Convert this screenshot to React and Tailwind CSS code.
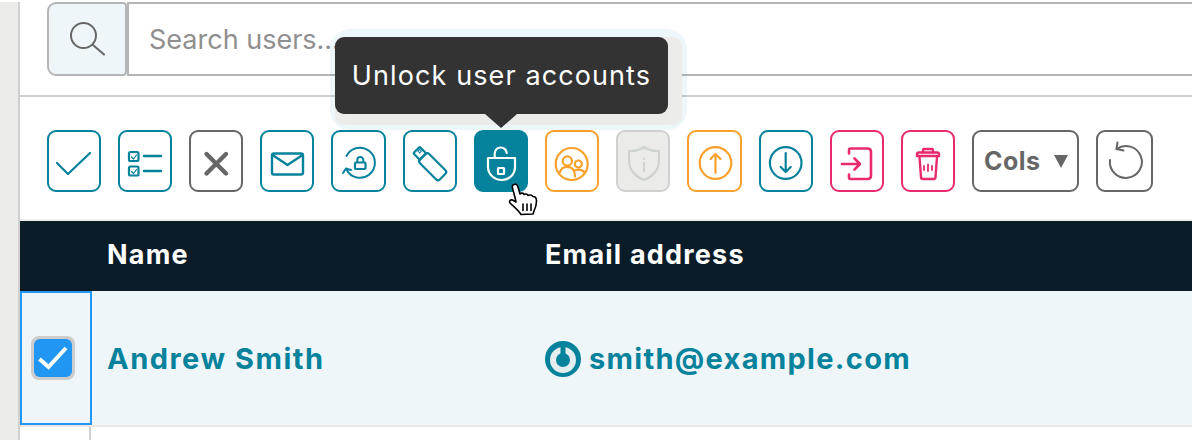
const TEAL = "#06829c"
const ORANGE = "#f9a12c"
const PINK = "#e92a6f"
const GREY = "#666666"

// every icon is drawn in button coordinates, so the viewBox skips the 2px border
function Tool({ className, children }) {
  return (
    <button className={`h-[62px] shrink-0 rounded-[9px] border-2 bg-white ${className}`}>
      <svg viewBox="2 2 50 58" preserveAspectRatio="xMidYMid meet" className="h-full w-full" fill="none" strokeLinecap="round" strokeLinejoin="round">
        {children}
      </svg>
    </button>
  )
}

function Check() {
  return <path d="M10 33 L21 44 L43 23" stroke={TEAL} strokeWidth="2.2" />
}

function CheckList() {
  return (
    <g stroke={TEAL} strokeWidth="2.2">
      <rect x="11" y="22" width="9.5" height="9" rx="1.5" />
      <rect x="11" y="36.5" width="9.5" height="9" rx="1.5" />
      <path d="M13.5 27 L15.5 29 L18.5 25 M13.5 41.5 L15.5 43.5 L18.5 39.5" strokeWidth="1.2" />
      <path d="M26 26 H43 M26 41 H43" strokeWidth="2.4" />
    </g>
  )
}

function Cross() {
  return <path d="M17.5 24 L37 43.5 M37 24 L17.5 43.5" stroke={GREY} strokeWidth="4.4" />
}

function Mail() {
  return (
    <g stroke={TEAL} strokeWidth="2.4">
      <rect x="12" y="23.5" width="31" height="21" rx="2" />
      <path d="M12.5 25 L27.5 35 L42.5 25" />
    </g>
  )
}

function LockCycle() {
  return (
    <g stroke={TEAL} strokeWidth="2">
      <path d="M15 26 A15 15 0 1 1 15 39.5" />
      <path d="M11.5 43 L14.5 38.5 L19.5 40" />
      <rect x="23.5" y="32.5" width="10.5" height="6.5" rx="1" strokeWidth="2.2" />
      <path d="M25.8 32 V30 A3 3 0 0 1 31.8 30 V32" />
    </g>
  )
}

function Usb() {
  return (
    <g stroke={TEAL} strokeWidth="2.2">
      <rect x="15.7" y="30.2" width="28" height="13" rx="2.5" transform="rotate(45 29.7 36.7)" />
      <rect x="12.2" y="18.8" width="9" height="9" rx="1" transform="rotate(45 16.7 23.3)" />
      <rect x="15.5" y="20" width="2.4" height="2.4" strokeWidth="1" transform="rotate(45 16.7 21.2)" />
    </g>
  )
}

function Unlock() {
  return (
    <g stroke="#ffffff" strokeWidth="2.2">
      <path d="M14 28 H41 V37 A13 13 0 0 1 28 50 A14 13 0 0 1 14 37 Z" />
      <path d="M20.7 27.5 V24 A6 6 0 0 1 32.7 23" />
      <rect x="24" y="38" width="6" height="6" rx="0.5" />
    </g>
  )
}

function Group() {
  return (
    <g stroke={ORANGE} strokeWidth="2.2">
      <circle cx="26.7" cy="34" r="16" />
      <circle cx="22.3" cy="31" r="4.6" />
      <circle cx="33.3" cy="34" r="3.5" />
      <path d="M15 42 C16 38 19 36.8 22.3 36.8 C27 36.8 30 40.5 30 46.5" />
      <path d="M30 40.2 C34 39 38 40 40 43" />
    </g>
  )
}

function Shield() {
  return (
    <g stroke="#cfd3d0" strokeWidth="2.2">
      <path d="M28 17 C32 20 37 21 43 21 V31 C43 40 36 47 28 50 C20 47 13 40 13 31 V21 C19 21 24 20 28 17 Z" />
      <path d="M28 33 V41 M28 28.5 V29" />
    </g>
  )
}

function ArrowUp() {
  return (
    <g stroke={ORANGE} strokeWidth="2.2">
      <circle cx="28" cy="33" r="15.8" />
      <path d="M28 43 V24 M23 29 L28 24 L33 29" />
    </g>
  )
}

function ArrowDown() {
  return (
    <g stroke={TEAL} strokeWidth="2.2">
      <circle cx="26.7" cy="33" r="15.8" />
      <path d="M26.7 23 V42 M21.7 37 L26.7 42 L31.7 37" />
    </g>
  )
}

function Login() {
  return (
    <g stroke={PINK} strokeWidth="2.6">
      <path d="M19 23.5 V20 Q19 18.5 20.5 18.5 H37.5 Q41 18.5 41 22 V45.5 Q41 49 37.5 49 H20.5 Q19 49 19 47.5 V44.5" />
      <path d="M12 34 H30 M24.5 28.5 L30 34 L24.5 39.5" />
    </g>
  )
}

function Trash() {
  return (
    <g stroke={PINK} strokeWidth="2.4">
      <path d="M16 26 V24 Q16 22.5 18 22.5 H36 Q38 22.5 38 24 V26 Z" />
      <path d="M22 22.5 V20 Q22 19 23 19 H31 Q32 19 32 20 V22.5" />
      <path d="M18.5 27 L20 47 Q20 49 22 49 H32.5 Q34.5 49 34.5 47 L36 27" />
      <path d="M23 36 V40 M27 34.5 V41 M31 36 V40" strokeWidth="1.8" />
    </g>
  )
}

function Reset() {
  return (
    <g stroke={GREY} strokeWidth="2">
      <path d="M19 19 A16 16 0 1 1 12.5 30" />
      <path d="M20 12.5 L19 19 L26 20.5" />
    </g>
  )
}

function HandCursor() {
  return (
    <svg viewBox="0 0 30 33" className="h-[33px] w-[30px]" strokeLinejoin="round" strokeLinecap="round">
      <path
        d="M6 1.5 C8 0.5 9.5 2 10 4 L12 11 C13.5 9.5 15.5 10 16 11.5 C17.5 10.5 19.5 11 20 12.5 C21.5 11.5 24 12 25 13.5 C27.5 13.5 28.5 15.5 28.5 18 C28.5 22 27.5 25 26 28 L25 31 L13 31.5 C11 28 7 24.5 2.5 20.5 C0.5 18.5 2 16.5 4.5 17 L8 19 C7 14 5.5 9 4.5 5 C4 3.5 4.5 2 6 1.5 Z"
        fill="#ffffff"
        stroke="#000000"
        strokeWidth="1.6"
      />
      <path d="M15 21 V27.5 M19 21 V27.5 M23 21 V27.5" stroke="#000000" strokeWidth="1.6" />
    </svg>
  )
}

export default function App() {
  const tools = [
    { cls: "w-[54px] border-[#06829c]", icon: <Check /> },
    { cls: "w-[54px] border-[#06829c]", icon: <CheckList /> },
    { cls: "w-[54px] border-[#666666]", icon: <Cross /> },
    { cls: "w-[54px] border-[#06829c]", icon: <Mail /> },
    { cls: "w-[55px] border-[#06829c]", icon: <LockCycle /> },
    { cls: "w-[54px] border-[#06829c]", icon: <Usb /> },
    { cls: "w-[54px] border-[#06829c] !bg-[#06829c]", icon: <Unlock /> },
    { cls: "w-[54px] border-[#f9a12c]", icon: <Group /> },
    { cls: "w-[54px] border-[#d0d0d0] !bg-[#ebebe9]", icon: <Shield /> },
    { cls: "w-[55px] border-[#f9a12c]", icon: <ArrowUp /> },
    { cls: "w-[54px] border-[#06829c]", icon: <ArrowDown /> },
    { cls: "w-[54px] border-[#e92a6f]", icon: <Login /> },
    { cls: "w-[54px] border-[#e92a6f]", icon: <Trash /> },
  ]

  return (
    <div className="relative h-[440px] w-[1192px] overflow-hidden bg-white pt-[2px] font-['Inter',sans-serif]">
      <div className="flex h-[438px]">
        {/* gutter on the left */}
        <div className="w-[20px] shrink-0 border-r-2 border-[#d0d0d0] bg-[#ebebe9]" />

        <div className="min-w-0 flex-1">
          {/* search */}
          <div className="flex h-[95px] border-b-2 border-[#d0d0d0] pl-[27px]">
            <button className="flex h-[74px] w-[80px] shrink-0 items-center justify-center rounded-l-[9px] rounded-r-[4px] border-2 border-[#b5b5b5] bg-[#eef6f9]">
              <svg viewBox="0 0 40 40" className="h-[40px] w-[40px]" fill="none" stroke="#666666" strokeWidth="2" strokeLinecap="round">
                <circle cx="16.5" cy="16.5" r="12.5" />
                <path d="M26 26 L37 35.5" />
              </svg>
            </button>
            <div className="flex h-[74px] flex-1 items-center border-y-2 border-l-2 border-[#b5b5b5] pl-[20px] pt-[2px] text-[27px] text-[#8f8f8f]">
              Search users...
            </div>
          </div>

          {/* toolbar */}
          <div className="flex h-[124px] items-start gap-[17px] border-b-2 border-[#eeeeee] pl-[27px] pt-[33px]">
            {tools.map((t, i) => (
              <Tool key={i} className={t.cls}>{t.icon}</Tool>
            ))}
            <button className="flex h-[62px] w-[107px] shrink-0 items-center justify-between rounded-[9px] border-2 border-[#666666] bg-white pl-[10px] pr-[9px] pt-[1px] text-[25px] font-bold tracking-[0.5px] text-[#666666]">
              <span>Cols</span>
              <svg viewBox="0 0 14 13" className="h-[13px] w-[14px]">
                <path d="M0 0 H14 L7 13 Z" fill="#666666" />
              </svg>
            </button>
            <Tool className="w-[57px] border-[#666666]"><Reset /></Tool>
          </div>

          {/* table */}
          <div className="flex h-[70px] items-center bg-[#0b1c29] pb-[2px] text-[27px] font-bold tracking-[1.2px] text-white">
            <div className="w-[87px] shrink-0" />
            <div className="w-[438px] shrink-0">Name</div>
            <div>Email address</div>
          </div>
          <div className="flex h-[136px] items-center border-b-2 border-[#e8e8e8] bg-[#eef6f9] text-[29px] font-bold tracking-[1.5px] text-[#06829c]">
            <div className="flex h-[134px] w-[72px] shrink-0 items-center justify-center border-2 border-[#2196f3] pr-[6px]">
              <div className="flex h-[44px] w-[44px] items-center justify-center rounded-[8px] bg-[#cccccc]">
                <div className="flex h-[38px] w-[38px] items-center justify-center rounded-[6px] bg-[#2196f3]">
                  <svg viewBox="0 0 30 24" className="h-[24px] w-[30px]" fill="none" stroke="#ffffff" strokeWidth="4">
                    <path d="M1.5 13 L10.5 21 L28 2" />
                  </svg>
                </div>
              </div>
            </div>
            <div className="w-[453px] shrink-0 pl-[15px] pt-[2px]">Andrew Smith</div>
            <div className="flex items-center gap-[8px] pt-[2px]">
              <svg viewBox="0 0 36 36" className="h-[36px] w-[36px]" fill="none">
                <circle cx="18" cy="18" r="18" fill="#06829c" />
                <circle cx="18" cy="19" r="10" stroke="#e5eeef" strokeWidth="6" />
                <path d="M18 4 V18" stroke="#06829c" strokeWidth="5" strokeLinecap="round" />
              </svg>
              <span className="tracking-[1.3px]">smith@example.com</span>
            </div>
          </div>
          <div className="ml-[69px] h-[14px] w-[2px] bg-[#d0d0d0]" />
        </div>
      </div>

      {/* tooltip over the toolbar */}
      <div className="absolute left-[335px] top-[37px] flex h-[77px] w-[333px] items-center justify-center rounded-[9px] bg-[#333333] pt-[2px] text-[27px] tracking-[1.1px] text-white shadow-[14px_11px_0_0_rgba(235,235,233,0.85),0_11px_0_0_rgba(235,235,233,0.85),14px_0_0_0_rgba(235,235,233,0.85),7px_4px_0_12px_rgba(6,130,156,0.07)]">
        Unlock user accounts
        <div className="absolute left-[150px] top-[77px] h-0 w-0 border-x-[16px] border-t-[14px] border-x-transparent border-t-[#333333]" />
      </div>

      {/* mouse pointer */}
      <div className="absolute left-[508px] top-[183px]">
        <HandCursor />
      </div>
    </div>
  )
}
